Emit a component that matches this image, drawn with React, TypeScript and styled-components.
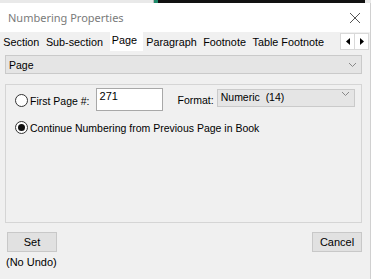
import React from "react";
import styled, { createGlobalStyle } from "styled-components";

const Global = createGlobalStyle`
  html, body { margin: 0; padding: 0; background: #f0f0f0; }
  body { font-family: "Liberation Sans", Arial, sans-serif; font-size: 10.5px; color: #000; overflow: hidden; }
`;

const TopStrip = styled.div`
  display: flex;
  height: 3px;
  background: #e9e9e9;
`;
const StripGap = styled.div`
  width: 153px;
  border-right: 1px solid #bbb;
`;
const StripGreen = styled.div`
  width: 4px;
  background: #1f8a6a;
`;
const StripBlack = styled.div`
  width: 207px;
  background: #111;
`;

const Window = styled.div`
  width: 370px;
  height: 276px;
  border-right: 1px solid #d0d0d0;
  background: #f0f0f0;
  display: flex;
  flex-direction: column;
  overflow: hidden;
`;

const TitleBar = styled.div`
  height: 29px;
  flex: none;
  background: #fff;
  display: flex;
  align-items: center;
  justify-content: space-between;
  padding: 0 9px 0 8px;
`;
const Title = styled.div`
  font-family: "Noto Sans", "Open Sans", sans-serif;
  font-size: 11px;
  color: #7a7a7a;
`;

const Tabs = styled.div`
  display: flex;
  align-items: flex-end;
  height: 19px;
  flex: none;
  padding-left: 0;
`;
const Tab = styled.div<{ $active?: boolean }>`
  padding: ${(p) => (p.$active ? "0 6px 0 2px" : "0 3.3px")};
  margin-left: ${(p) => (p.$active ? "3.5px" : "0")};
  height: ${(p) => (p.$active ? "19px" : "17px")};
  line-height: 17px;
  background: ${(p) => (p.$active ? "#fff" : "transparent")};
  white-space: nowrap;
  font-size: 10.8px;
`;
const TabSpacer = styled.div`
  flex: 1;
`;
const Arrows = styled.div`
  display: flex;
  margin-right: 1px;
  margin-bottom: 1px;
`;
const Arrow = styled.div`
  width: 13px;
  height: 15px;
  border: 1px solid #d9d9d9;
  background: #fff;
  display: flex;
  align-items: center;
  justify-content: center;
  & + & { border-left: none; }
`;

const Body = styled.div`
  flex: 1;
  display: flex;
  flex-direction: column;
  padding: 4px 8px 0 5px;
`;

const Combo = styled.div<{ $w?: string }>`
  height: 17px;
  background: #e5e5e5;
  border: 1px solid #cacaca;
  display: flex;
  align-items: center;
  justify-content: space-between;
  padding: 0 4px 0 3px;
  white-space: nowrap;
  ${(p) => (p.$w ? `width: ${p.$w}; box-sizing: border-box;` : "")}
`;

const Group = styled.div`
  margin-top: 10px;
  height: 139px;
  border: 1px solid #d5d5d5;
  display: flex;
  flex-direction: column;
  padding: 3px 0 0 9px;
  box-sizing: border-box;
`;

const Row = styled.div`
  display: flex;
  align-items: center;
  white-space: nowrap;
`;
const FirstRow = styled(Row)`
  align-items: flex-start;
`;
const RadioLabel = styled(Row)`
  margin-top: 6px;
`;
const ContinueRow = styled(Row)`
  margin-top: 10px;
`;

const RadioCircle = styled.div<{ $on?: boolean }>`
  width: 11px;
  height: 11px;
  border: 1px solid #333;
  border-radius: 50%;
  background: #fff;
  display: flex;
  align-items: center;
  justify-content: center;
  margin-right: 2px;
  &::after {
    content: "";
    display: ${(p) => (p.$on ? "block" : "none")};
    width: 7px;
    height: 7px;
    border-radius: 50%;
    background: #111;
  }
`;

const TextBox = styled.div`
  width: 67px;
  height: 23px;
  border: 1px solid #a8a8a8;
  background: #fff;
  margin-left: 6px;
  padding: 1px 3px;
  box-sizing: border-box;
  font-size: 11px;
`;

const FormatLabel = styled.div`
  margin-left: 15px;
  margin-right: 3px;
  margin-top: 6px;
`;
const FormatCombo = styled(Combo)`
  margin-top: 1px;
  height: 18px;
  box-sizing: border-box;
  align-items: flex-start;
  padding-top: 1px;
`;

const Footer = styled.div`
  display: flex;
  justify-content: space-between;
  padding: 9px 0 0 2px;
`;
const Col = styled.div`
  display: flex;
  flex-direction: column;
`;
const Button = styled.div`
  width: 48px;
  height: 18px;
  border: 1px solid #c8c8c8;
  background: #e1e1e1;
  display: flex;
  align-items: center;
  justify-content: center;
  font-size: 11px;
`;
const Note = styled.div`
  margin-top: 4px;
  margin-left: -1px;
  font-size: 11px;
`;

const Chevron = () => (
  <svg width="9" height="6" viewBox="0 0 9 6">
    <path d="M1 1 L4.5 4.5 L8 1" fill="none" stroke="#888" strokeWidth="1" />
  </svg>
);

export default function App() {
  return (
    <>
      <Global />
      <TopStrip>
        <StripGap />
        <StripGreen />
        <StripBlack />
      </TopStrip>
      <Window>
        <TitleBar>
          <Title>Numbering Properties</Title>
          <svg width="12" height="12" viewBox="0 0 12 12">
            <path d="M1 1 L11 11 M11 1 L1 11" stroke="#555" strokeWidth="1" />
          </svg>
        </TitleBar>
        <Tabs>
          <Tab>Section</Tab>
          <Tab>Sub-section</Tab>
          <Tab $active>Page</Tab>
          <Tab>Paragraph</Tab>
          <Tab>Footnote</Tab>
          <Tab>Table Footnote</Tab>
          <TabSpacer />
          <Arrows>
            <Arrow>
              <svg width="4" height="7" viewBox="0 0 4 7"><path d="M4 0 L0 3.5 L4 7Z" fill="#000" /></svg>
            </Arrow>
            <Arrow>
              <svg width="4" height="7" viewBox="0 0 4 7"><path d="M0 0 L4 3.5 L0 7Z" fill="#000" /></svg>
            </Arrow>
          </Arrows>
        </Tabs>
        <Body>
          <Combo>
            <span>Page</span>
            <Chevron />
          </Combo>
          <Group>
            <FirstRow>
              <RadioLabel>
                <RadioCircle />
                <span>First Page #:</span>
              </RadioLabel>
              <TextBox>271</TextBox>
              <FormatLabel>Format:</FormatLabel>
              <FormatCombo $w="138px">
                <span>Numeric&nbsp;&nbsp;(14)</span>
                <Chevron />
              </FormatCombo>
            </FirstRow>
            <ContinueRow>
              <RadioCircle $on />
              <span>Continue Numbering from Previous Page in Book</span>
            </ContinueRow>
          </Group>
          <Footer>
            <Col>
              <Button>Set</Button>
              <Note>(No Undo)</Note>
            </Col>
            <Button>Cancel</Button>
          </Footer>
        </Body>
      </Window>
    </>
  );
}
